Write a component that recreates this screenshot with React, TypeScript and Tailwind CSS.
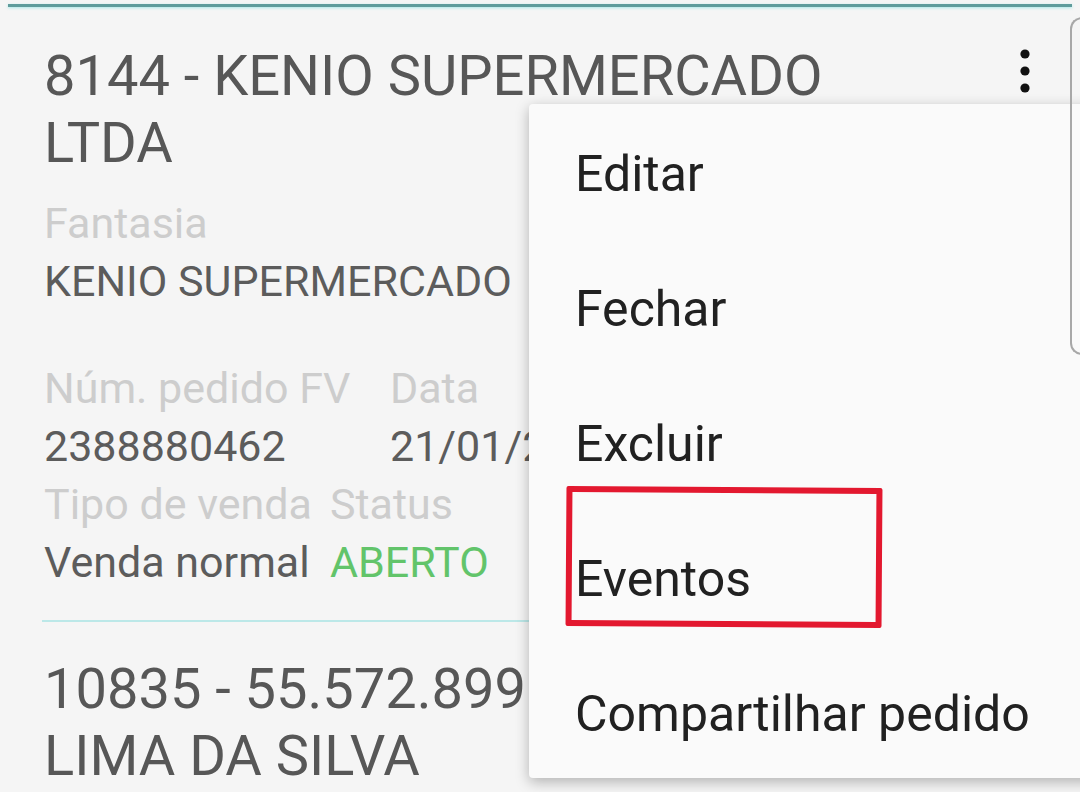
import { Fragment } from "react";

const menuItems = ["Editar", "Fechar", "Excluir", "Eventos", "Compartilhar pedido"];

function Label({ children }: { children: React.ReactNode }) {
  return <span className="text-[#cdcdcd]">{children}</span>;
}

export default function App() {
  return (
    <div className="relative h-[792px] w-[1080px] overflow-hidden bg-[#f5f5f5] font-['Roboto',sans-serif]">
      {/* top divider */}
      <div className="mx-[8px] mt-[4px] h-[3px] bg-[#5f9c9c] shadow-[0_1px_3px_rgba(150,230,230,0.8)]" />

      {/* order card */}
      <div className="pl-[44px] pr-[50px]">
        <div className="mt-[36px] flex items-start justify-between">
          <h1 className="w-[850px] text-[56px] leading-[67px] text-[#575757]">
            8144 - KENIO SUPERMERCADO LTDA
          </h1>
          <svg width="10" height="46" viewBox="0 0 10 46" className="mt-[6px]">
            <circle cx="5" cy="5" r="4.6" fill="#111" />
            <circle cx="5" cy="22" r="4.6" fill="#111" />
            <circle cx="5" cy="39" r="4.6" fill="#111" />
          </svg>
        </div>

        <div className="mt-[17px] text-[43px] leading-[58px] text-[#5c5c5c]">
          <Label>Fantasia</Label>
          <p>KENIO SUPERMERCADO</p>
        </div>

        <div className="mt-[49px] text-[43px] leading-[58px] text-[#5c5c5c]">
          <div className="grid grid-cols-[346px_1fr]">
            <Label>Núm. pedido FV</Label>
            <Label>Data</Label>
            <span>2388880462</span>
            <span>21/01/2021</span>
          </div>
          <div className="grid grid-cols-[286px_1fr]">
            <Label>Tipo de venda</Label>
            <Label>Status</Label>
            <span>Venda normal</span>
            <span className="text-[#62c46a]">ABERTO</span>
          </div>
        </div>
      </div>

      <div className="ml-[42px] mr-[40px] mt-[29px] h-[2px] bg-[#bce8e8]" />

      <div className="pl-[44px]">
        <h2 className="mt-[34px] w-[850px] text-[56px] leading-[67px] text-[#575757]">
          10835 - 55.572.899 ADRIANA LIMA DA SILVA
        </h2>
      </div>

      {/* overflow menu */}
      <div className="absolute left-[529px] top-[104px] h-[674px] w-[600px] overflow-hidden rounded-[4px] bg-[#fafafa] pt-[3px] shadow-[0_4px_14px_rgba(0,0,0,0.28)]">
        {menuItems.map((item) => (
          <Fragment key={item}>
            <div className="flex h-[135px] items-center pl-[46px] text-[50px] text-[#212121]">
              {item}
            </div>
          </Fragment>
        ))}
      </div>

      {/* edge of a sheet behind */}
      <div className="absolute left-[1070px] top-[17px] h-[338px] w-[30px] rounded-l-[12px] border-y-2 border-l-2 border-[#a8a8a8]" />

      {/* highlight annotation */}
      <div className="absolute left-[566px] top-[487px] h-[140px] w-[316px] rotate-[0.4deg] rounded-[2px] border-[6px] border-[#e3182f]" />
    </div>
  );
}
